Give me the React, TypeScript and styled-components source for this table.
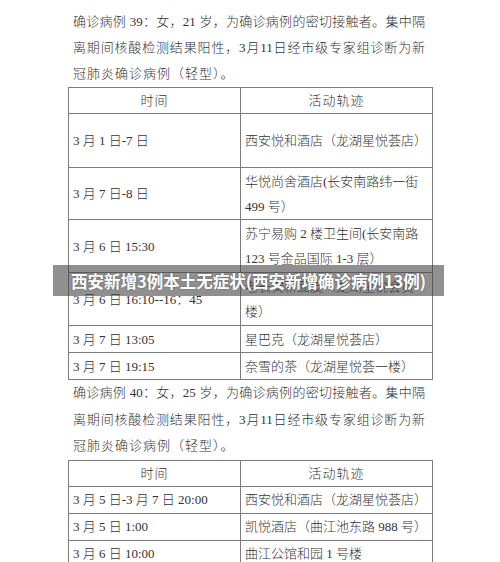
import React from 'react';
import styled, { createGlobalStyle } from 'styled-components';

const GlobalStyle = createGlobalStyle`
  html, body {
    margin: 0;
    padding: 0;
    background: #ffffff;
  }
  body {
    font-family: "Liberation Serif", "Noto Sans CJK SC", serif;
    color: #333;
  }
`;

const Page = styled.div`
  position: relative;
  width: 500px;
  height: 562px;
  overflow: hidden;
  background: #fff;
`;

const Doc = styled.div`
  width: 364px;
  margin: 0 auto;
  padding-top: 9px;
`;

const Para = styled.div<{ $lh: number }>`
  padding: 0 7px 0 5px;
  font-size: 13px;
  line-height: ${p => p.$lh}px;
  font-weight: 300;
  color: #333;
`;

const Line = styled.div<{ $full?: boolean }>`
  text-align: ${p => (p.$full ? 'justify' : 'left')};
  text-align-last: ${p => (p.$full ? 'justify' : 'left')};
  letter-spacing: ${p => (p.$full ? '0' : '1px')};
`;

const Table = styled.table`
  width: 364px;
  border-collapse: collapse;
  table-layout: fixed;
  font-size: 13px;
  font-weight: 300;
  color: #333;
`;

const Row = styled.tr<{ $h: number }>`
  height: ${p => p.$h}px;
`;

const Cell = styled.td<{ $center?: boolean }>`
  border: 1px solid #7c7c7c;
  padding: 0 4px;
  line-height: 25px;
  white-space: nowrap;
  vertical-align: middle;
  text-align: ${p => (p.$center ? 'center' : 'left')};
  letter-spacing: ${p => (p.$center ? '1px' : '0')};
`;

const Banner = styled.div`
  position: absolute;
  left: 53px;
  top: 265px;
  width: 391px;
  height: 31px;
  background: rgba(70, 70, 70, 0.6);
  display: flex;
  align-items: center;
  justify-content: center;
  color: #fff;
  font-family: "Noto Sans CJK SC", "Noto Sans", sans-serif;
  font-weight: 700;
  font-size: 16.5px;
  text-shadow: 0 0 2px rgba(0, 0, 0, 0.35);
  white-space: nowrap;
`;

type Entry = { h: number; time: string; place: string[] };

const table1: Entry[] = [
  { h: 54, time: '3 月 1 日-7 日', place: ['西安悦和酒店（龙湖星悦荟店）'] },
  { h: 52, time: '3 月 7 日-8 日', place: ['华悦尚舍酒店(长安南路纬一街', '499 号）'] },
  { h: 53, time: '3 月 6 日 15:30', place: ['苏宁易购 2 楼卫生间(长安南路', '123 号金品国际 1-3 层）'] },
  { h: 53, time: '3 月 6 日 16:10--16：45', place: ['老长安新面皮（龙湖星悦会员', '楼）'] },
  { h: 27, time: '3 月 7 日 13:05', place: ['星巴克（龙湖星悦荟店）'] },
  { h: 27, time: '3 月 7 日 19:15', place: ['奈雪的茶（龙湖星悦荟一楼）'] },
];

const table2: Entry[] = [
  { h: 27, time: '3 月 5 日-3 月 7 日 20:00', place: ['西安悦和酒店（龙湖星悦荟店）'] },
  { h: 27, time: '3 月 5 日 1:00', place: ['凯悦酒店（曲江池东路 988 号）'] },
  { h: 27, time: '3 月 6 日 10:00', place: ['曲江公馆和园 1 号楼'] },
];

const Track: React.FC<{ rows: Entry[] }> = ({ rows }) => (
  <Table>
    <colgroup>
      <col style={{ width: 172 }} />
      <col style={{ width: 192 }} />
    </colgroup>
    <tbody>
      <Row $h={26}>
        <Cell $center>时间</Cell>
        <Cell $center>活动轨迹</Cell>
      </Row>
      {rows.map((r, i) => (
        <Row key={i} $h={r.h}>
          <Cell>{r.time}</Cell>
          <Cell>
            {r.place.map((l, j) => (
              <div key={j}>{l}</div>
            ))}
          </Cell>
        </Row>
      ))}
    </tbody>
  </Table>
);

const Case: React.FC<{ no: number; age: number; lh: number }> = ({ no, age, lh }) => (
  <Para $lh={lh}>
    <Line $full>确诊病例 {no}：女，{age} 岁，为确诊病例的密切接触者。集中隔</Line>
    <Line $full>离期间核酸检测结果阳性，3月11日经市级专家组诊断为新</Line>
    <Line>冠肺炎确诊病例（轻型）。</Line>
  </Para>
);

export default function App() {
  return (
    <Page>
      <GlobalStyle />
      <Doc>
        <Case no={39} age={21} lh={26} />
        <Track rows={table1} />
        <Case no={40} age={25} lh={26.5} />
        <Track rows={table2} />
      </Doc>
      <Banner>西安新增3例本土无症状(西安新增确诊病例13例)</Banner>
    </Page>
  );
}
